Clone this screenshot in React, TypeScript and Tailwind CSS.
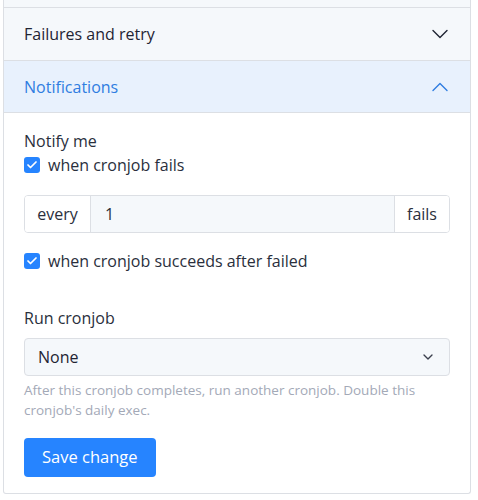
import { ChevronDown, ChevronUp, Check } from 'lucide-react';

function CheckRow({ label }: { label: string }) {
  return (
    <label className="flex items-center gap-2 h-[22px]">
      <span className="flex items-center justify-center w-4 h-4 rounded-[3px] bg-[#2684ff]">
        <Check className="w-3 h-3 text-white" strokeWidth={3.5} />
      </span>
      <span className="text-[16px] leading-[22px] text-[#2a2f3c]">{label}</span>
    </label>
  );
}

export default function App() {
  return (
    <div className="bg-white min-h-[500px] pl-[3px] w-[478px]" style={{ fontFamily: '"Open Sans", Lato, sans-serif' }}>
      <div className="w-[468px] border-x border-b border-[#dcdfe4] rounded-b-[3px]">
        {/* Previous section (cut off) */}
        <div className="h-[8px] bg-[#f5f8fb] border-b border-[#dcdfe4]" />

        {/* Failures and retry */}
        <div className="flex items-center justify-between h-[53px] pl-[20px] pr-[16px] bg-[#f5f8fb] border-b border-[#dcdfe4]">
          <span className="text-[16px] text-[#1f2433]">Failures and retry</span>
          <ChevronDown className="w-7 h-7 text-[#1f2433]" strokeWidth={1.2} />
        </div>

        {/* Notifications */}
        <div className="flex items-center justify-between h-[52px] pl-[20px] pr-[16px] bg-[#e8f1fd] border-b border-[#dcdfe4]">
          <span className="text-[16px] text-[#2f7de1]">Notifications</span>
          <ChevronUp className="w-7 h-7 text-[#2f7de1]" strokeWidth={1.2} />
        </div>

        {/* Body */}
        <div className="px-[20px] pt-[17px] pb-[16px]">
          <div className="text-[16px] text-[#2a2f3c] leading-[22px]">Notify me</div>
          <div className="mt-[2px]">
            <CheckRow label="when cronjob fails" />
          </div>

          <div className="flex mt-[19px] h-[38px] border border-[#dcdfe4] rounded-[4px] overflow-hidden text-[16px] text-[#2a2f3c]">
            <div className="flex items-center justify-center w-[66px] bg-white border-r border-[#dcdfe4]">every</div>
            <div className="flex items-center flex-1 bg-[#f5f8fb] px-[14px]">1</div>
            <div className="flex items-center justify-center w-[55px] bg-white border-l border-[#dcdfe4]">fails</div>
          </div>

          <div className="mt-[17px]">
            <CheckRow label="when cronjob succeeds after failed" />
          </div>

          <div className="mt-[35px] text-[16px] text-[#2a2f3c] leading-[22px]">Run cronjob</div>
          <div className="flex items-center justify-between mt-[9px] h-[38px] px-[13px] bg-[#f5f8fb] border border-[#dcdfe4] rounded-[4px]">
            <span className="text-[16px] text-[#1f2433]">None</span>
            <ChevronDown className="w-4 h-4 text-[#3a3f4c]" strokeWidth={2} />
          </div>
          <p className="mt-[4px] pr-[20px] text-[13.5px] leading-[20px] text-[#a3a9b7]">
            After this cronjob completes, run another cronjob. Double this cronjob's daily exec.
          </p>

          <button className="mt-[18px] h-[39px] px-[18px] rounded-[4px] bg-[#2684ff] text-white text-[16.5px] font-medium">
            Save change
          </button>
        </div>
      </div>
    </div>
  );
}
